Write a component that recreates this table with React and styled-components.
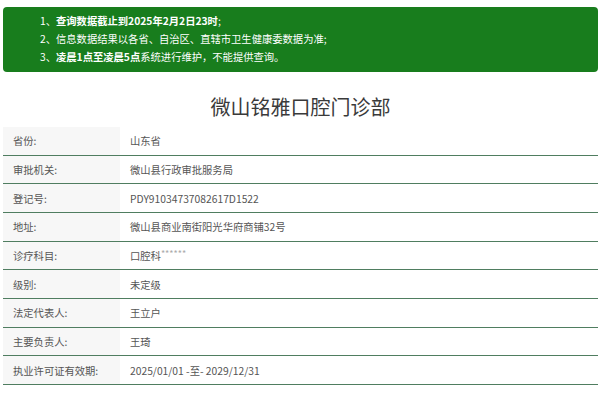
import React from "react";
import styled, { createGlobalStyle } from "styled-components";

const GlobalStyle = createGlobalStyle`
  html, body {
    margin: 0;
    padding: 0;
    background: #fff;
  }
  body {
    font-family: "Noto Sans CJK SC", "Noto Sans", sans-serif;
    color: #555;
  }
`;

const notices = [
  { no: "1、", parts: [{ b: true, t: "查询数据截止到2025年2月2日23时" }, { t: ";" }] },
  { no: "2、", parts: [{ t: "信息数据结果以各省、自治区、直辖市卫生健康委数据为准;" }] },
  { no: "3、", parts: [{ b: true, t: "凌晨1点至凌晨5点" }, { t: "系统进行维护，不能提供查询。" }] },
];

const rows = [
  ["省份:", "山东省"],
  ["审批机关:", "微山县行政审批服务局"],
  ["登记号:", "PDY91034737082617D1522"],
  ["地址:", "微山县商业南街阳光华府商铺32号"],
  ["诊疗科目:", "口腔科", "******"],
  ["级别:", "未定级"],
  ["法定代表人:", "王立户"],
  ["主要负责人:", "王琦"],
  ["执业许可证有效期:", "2025/01/01 -至- 2029/12/31"],
];

export default function App() {
  return (
    <Page>
      <GlobalStyle />
      <Notice>
        {notices.map((n) => (
          <NoticeLine key={n.no}>
            {n.no}
            {n.parts.map((p, i) => (p.b ? <b key={i}>{p.t}</b> : <span key={i}>{p.t}</span>))}
          </NoticeLine>
        ))}
      </Notice>
      <Title>微山铭雅口腔门诊部</Title>
      <Table>
        {rows.map(([label, value, mask]) => (
          <Row key={label}>
            <Label>{label}</Label>
            <Value>
              {value}
              {mask && <Mask>{mask}</Mask>}
            </Value>
          </Row>
        ))}
      </Table>
    </Page>
  );
}

const Page = styled.div`
  width: 595px;
  margin: 0 0 0 3px;
  padding-top: 7px;
`;

const Notice = styled.div`
  background: #187d1d;
  border-radius: 4px;
  padding: 5px 0 6px 37px;
  color: #fff;
  font-size: 10.3px;
  line-height: 18px;

  b {
    font-weight: 700;
  }
`;

const NoticeLine = styled.div`
  white-space: nowrap;
`;

const Title = styled.h1`
  margin: 21px 0 6px;
  text-align: center;
  font-size: 20px;
  line-height: 28px;
  font-weight: 400;
  color: #3a3a3a;
`;

const Table = styled.div`
  display: flex;
  flex-direction: column;
`;

const Row = styled.div`
  display: grid;
  grid-template-columns: 117px 1fr;
  height: 28.67px;
  box-sizing: border-box;
  border-bottom: 1.5px solid #4f7d60;
  font-size: 10.3px;
`;

const Label = styled.div`
  background: #f7f7f7;
  display: flex;
  align-items: center;
  padding-left: 10px;
  color: #555;
`;

const Value = styled.div`
  display: flex;
  align-items: center;
  padding-left: 10px;
  color: #555;
`;

const Mask = styled.span`
  color: #aaa;
  font-size: 9px;
  margin-top: -3px;
`;
